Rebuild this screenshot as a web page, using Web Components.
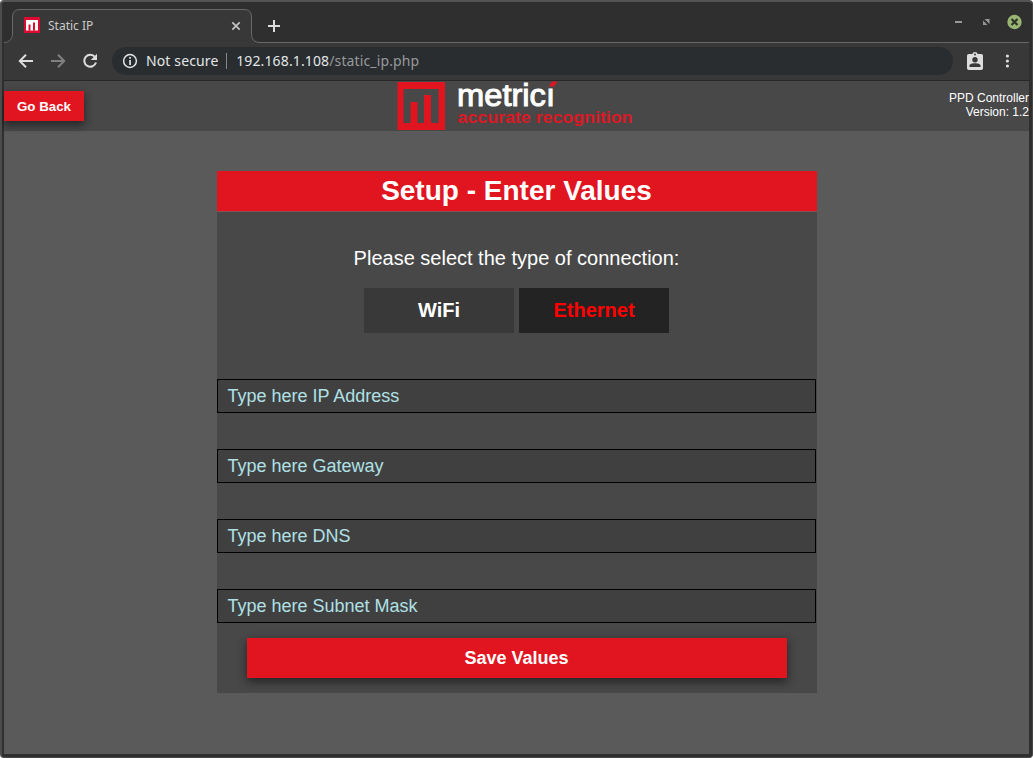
<!DOCTYPE html>
<html lang="en">
<head>
<meta charset="utf-8">
<title>Static IP</title>
<style>
html,body{margin:0;height:100%;background:#fff;overflow:hidden}
</style>
</head>
<body>
<browser-window>
  <tab-strip slot="chrome">Static IP</tab-strip>
  <address-bar slot="chrome"><span slot="status">Not secure</span><span slot="host">192.168.1.108</span><span slot="path">/static_ip.php</span></address-bar>
  <page-header><red-button slot="left" class="back">Go Back</red-button><brand-logo slot="logo"></brand-logo><span slot="info">PPD Controller<br>Version: 1.2</span></page-header>
  <setup-card>
    <span slot="title">Setup - Enter Values</span>
    <span slot="prompt">Please select the type of connection:</span>
    <choice-button slot="choice">WiFi</choice-button>
    <choice-button slot="choice" selected>Ethernet</choice-button>
    <value-field>Type here IP Address</value-field>
    <value-field>Type here Gateway</value-field>
    <value-field>Type here DNS</value-field>
    <value-field>Type here Subnet Mask</value-field>
    <red-button slot="action" class="save">Save Values</red-button>
  </setup-card>
</browser-window>
<script>
const define = (name, html) => customElements.define(name, class extends HTMLElement {
  constructor() {
    super();
    const t = document.createElement('template');
    t.innerHTML = html;
    this.attachShadow({mode: 'open'}).append(t.content.cloneNode(true));
  }
});

define('browser-window', `
<style>
:host{display:flex;flex-direction:column;box-sizing:border-box;width:1033px;height:758px;border:2px solid #4c4c4c;
 background:#5a5a5a;border-radius:4px;overflow:hidden;font-family:"Liberation Sans",Arial,sans-serif;color:#fff;
 border-bottom:1px solid #484848;border-top:2px solid #545454;border-right:1px solid #464646}
.in{flex:1;display:flex;flex-direction:column;border:solid #2f2f2f;border-width:0 3px 3px 2px;min-height:0}
.chrome{flex:none;height:79px;background:#383838}
</style>
<div class="in"><div class="chrome"><slot name="chrome"></slot></div><slot></slot></div>`);

define('tab-strip', `
<style>
:host{display:flex;height:41px;background:#2f2f2f;font:12px "Noto Sans",sans-serif;color:#c9c9c9;position:relative}
.outline{position:absolute;left:0;top:0}
.tab{position:relative;display:flex;align-items:center;width:240px;margin-left:8px;box-sizing:border-box;padding:5px 10px 0 12px}
.label{flex:1;padding-left:8px}
.close{margin-top:1px}
.plus{position:relative;margin:18px 0 0 16px}
.controls{position:relative;margin-left:auto;margin-top:12px;margin-right:6px}
svg{display:block}
</style>
<svg class="outline" width="1025" height="41"><path d="M0 40.500C5 40.500 8.500 37 8.500 32V15Q8.500 7.500 16 7.500H240Q247.500 7.500 247.500 15V32Q247.500 40.500 256 40.500H1026V43H-1V40.500Z" fill="#383838" stroke="#686868"/></svg>
<div class="tab">
<svg width="16" height="16"><path fill="#dc0a31" d="M0 0h16v16H0z"/><path d="M2 3h12v10.500H2z" fill="#fff"/><path d="M4.500 7.500h2v6h-2zM9 5.500h2v8H9z" fill="#dc0a31"/></svg>
<span class="label"><slot></slot></span>
<svg class="close" width="12" height="12"><path d="M2.300 2.300l7.400 7.400m0-7.400l-7.400 7.400" stroke="#c4c4c4" stroke-width="1.700"/></svg></div>
<svg class="plus" width="12" height="12"><path d="M6 0v12M0 6h12" stroke="#ddd" stroke-width="2"/></svg>
<svg class="controls" width="70" height="16"><path d="M2 8h7" stroke="#999" stroke-width="2"/><path d="M31.500 5h5v5zM30 6.500v4.500h4.500z" fill="#969696"/><circle cx="61.500" cy="8" r="7.200" fill="#98b572"/><path d="M58.500 5l6 6m0-6l-6 6" stroke="#2f3528" stroke-width="2.200"/></svg>`);

define('address-bar', `
<style>
:host{display:flex;align-items:center;height:38px;box-sizing:border-box;padding:0 0 2px 14px;background:#383838;border-bottom:1px solid #282828;font:14px/28px "Noto Sans",sans-serif;color:#e2e6e8}
.url{display:flex;align-items:center;width:841px;height:28px;border-radius:14px;background:#292d30;margin-left:14px;box-sizing:border-box;padding-left:10px;letter-spacing:.13px}
.sep{width:1px;height:16px;background:#85898b;margin:0 9px 0 7.700px}
.status{padding-left:8px}.path{color:#96999b}
svg{display:block;flex:none}
.fwd{margin-left:16px}.reload{margin-left:16px}
</style>
<svg width="16" height="16" fill="none" stroke="#ddd" stroke-width="2"><path d="M15 8H2.500M8 1.800L1.800 8L8 14.200"/></svg>
<svg class="fwd" width="16" height="16" fill="none" stroke="#808080" stroke-width="2"><path d="M1 8h12.500M8 1.800L14.200 8L8 14.200"/></svg>
<svg class="reload" width="16" height="16"><path d="M13 4A6 6 0 1 0 14 9.500" fill="none" stroke="#ddd" stroke-width="2"/><path d="M15 .8V7H8.800Z" fill="#ddd"/></svg>
<div class="url"><svg width="16" height="16"><circle cx="8" cy="8" r="6.400" fill="none" stroke="#e2e6e8" stroke-width="1.500"/><path d="M7.200 7h1.700v5H7.200zM7.200 4h1.700v1.700H7.200z" fill="#e2e6e8"/></svg>
<span class="status"><slot name="status"></slot></span><i class="sep"></i><slot name="host"></slot><span class="path"><slot name="path"></slot></span></div>
<svg width="18" height="20" style="margin-left:13px"><path d="M2.800 3H6.300a2.800 2.800 0 0 1 5.400 0h3.500Q17 3 17 4.800v12.400Q17 19 15.200 19H2.800Q1 19 1 17.200V4.800Q1 3 2.800 3Z" fill="#ddd"/><circle cx="9" cy="3.400" r="1" fill="#383838"/><circle cx="9" cy="8.800" r="2.700" fill="#383838"/><path d="M3.500 16v-1.500c0-3 11-3 11 0V16z" fill="#383838"/></svg>
<svg width="6" height="16" style="margin-left:20px" fill="#ddd"><circle cx="3.400" cy="3" r="1.600"/><circle cx="3.400" cy="8" r="1.600"/><circle cx="3.400" cy="13" r="1.600"/></svg>`);

define('page-header', `
<style>
:host{display:grid;grid-template-columns:1fr 240px 1fr;flex:none;height:50px;background:#484848}
.left{padding-top:10px}.info{text-align:right;font-size:12px;line-height:14px;padding-top:10px}
::slotted(.back){width:80px;height:30px;font-size:13.330px}
</style>
<div class="left"><slot name="left"></slot></div><slot name="logo"></slot><div class="info"><slot name="info"></slot></div>`);

define('red-button', `
<style>
:host{display:block}
button{width:100%;height:100%;border:0;padding:0 var(--shift,0px) 0 0;background:#e11520;color:#fff;font:inherit;font-weight:bold;box-shadow:0 4px 8px rgba(0,0,0,.3),0 3px 10px rgba(0,0,0,.25)}
</style><button><slot></slot></button>`);

define('brand-logo', `
<style>:host{display:block}svg{display:block;overflow:visible}text{font-family:"Liberation Sans",Arial,sans-serif}</style>
<svg width="240" height="50">
<path fill="#e11520" fill-rule="evenodd" d="M.5 1h47.500v48H.5zM6.500 8v34h7V21h7v21h6.500V14h7v28h7.500V8z"/>
<text x="60" y="24.500" font-size="31" fill="#fff" stroke="#fff" stroke-width="1" textLength="98" lengthAdjust="spacingAndGlyphs">metric&#305;</text>
<path d="M152 5.500L155 .5H160.500L157 5.500Z" fill="#e11520"/>
<text x="60.500" y="42" font-size="17" font-weight="bold" fill="#dc1824" textLength="175" lengthAdjust="spacingAndGlyphs">accurate recognition</text>
</svg>`);

define('setup-card', `
<style>
:host{display:flex;flex-direction:column;box-sizing:border-box;width:600px;height:522px;flex:none;background:#484848;margin:40px 0 0 213px}
.title{height:40px;line-height:40px;background:#e11520;border-bottom:1px solid #875052;text-align:center;font-size:28px;font-weight:bold;padding-right:1px}
.prompt{text-align:center;font-size:20px;line-height:24px;margin-top:34px;padding-right:1px}
.choices{display:flex;justify-content:center;gap:5px;margin-top:18px;padding-right:1px}
.fields{display:flex;flex-direction:column;gap:36px;margin-top:46px;padding-right:1px}
.action{padding:15px 30px 0}
::slotted(.save){height:40px;font-size:18px;--shift:1px}
</style>
<div class="title"><slot name="title"></slot></div>
<div class="prompt"><slot name="prompt"></slot></div>
<div class="choices"><slot name="choice"></slot></div>
<div class="fields"><slot></slot></div>
<div class="action"><slot name="action"></slot></div>`);

define('choice-button', `
<style>
:host{display:block;width:150px;height:45px;background:#393939;color:#fff}
:host([selected]){background:#232323;color:#f00}
button{width:100%;height:100%;border:0;padding:0;background:none;color:inherit;font:bold 20px "Liberation Sans",Arial,sans-serif}
</style><button><slot></slot></button>`);

define('value-field', `
<style>:host{display:block;box-sizing:border-box;height:34px;border:1px solid #000;background:#404040;color:#b0e0e6;font-size:18px;line-height:32px;padding-left:9.500px}</style><slot></slot>`);
</script>
</body>
</html>
